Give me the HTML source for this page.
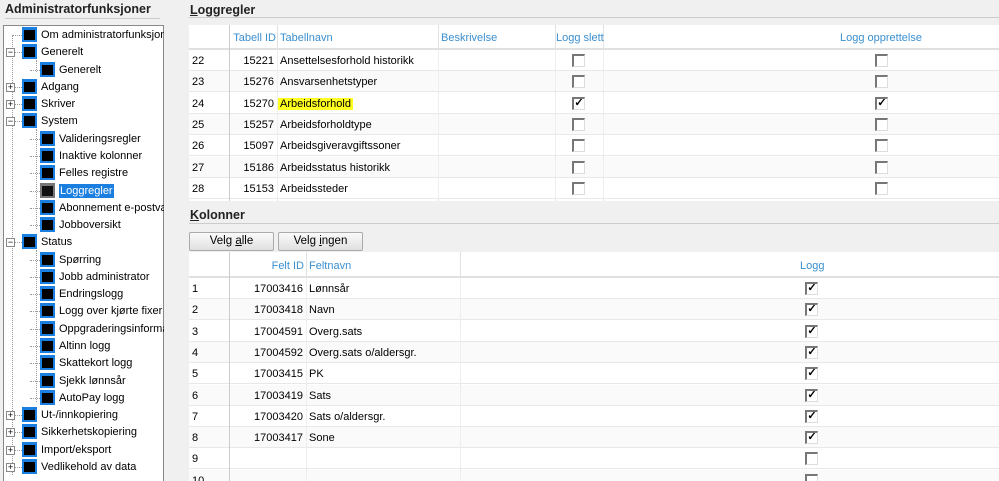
<!DOCTYPE html>
<html><head><meta charset="utf-8"><style>
*{margin:0;padding:0;box-sizing:border-box}
html,body{width:999px;height:481px;overflow:hidden}
body{background:#f0f0f0;font-family:"Liberation Sans",Arial,sans-serif;font-size:11px;color:#000;position:relative}
.a{position:absolute;white-space:nowrap}
.h1{font-size:12.5px;font-weight:bold;color:#222}
.tree{position:absolute;left:3px;top:25px;width:161px;height:460px;background:#fff;border:1px solid #888;overflow:hidden}
.ic{position:absolute;width:15px;height:15px;background:#000;border:2px solid #1a7fe0;border-top-width:3px}
.ex{position:absolute;width:9px;height:9px;border:1px solid #888;background:#fff;font-size:9px;line-height:7px;text-align:center;color:#000}
.vl{position:absolute;border-left:1px dotted #999}
.hl{position:absolute;border-top:1px dotted #999;height:0}
.tbl{position:absolute;background:#fff}
.hd{color:#3a8fd0}
.cb{position:absolute;width:13px;height:13px;border:1px solid #777;border-right-color:#ddd;border-bottom-color:#ddd;border-left-width:2px;border-top-width:2px;background:#fff;font-size:11px;line-height:9px;text-align:center;font-weight:bold}
.btn{position:absolute;height:19px;border:1px solid #aaa;border-radius:2px;background:linear-gradient(#fafafa,#e0e0e0);text-align:center;line-height:17px;font-size:11.5px}
.row{position:absolute;left:0;right:0;border-bottom:1px solid #e4e4e4}
.vc{position:absolute;top:0;bottom:0;border-left:1px solid #e2e2e2}
</style></head><body>

<div class="a h1" style="left:5px;top:2px">Administratorfunksjoner</div>
<div class="a" style="left:5px;top:18px;width:155px;border-top:1px solid #ccc"></div>

<div class="tree">
 <div class="vl" style="left:8px;top:9px;height:440px"></div>
 <div class="vl" style="left:32px;top:34px;height:12px"></div>
 <div class="vl" style="left:32px;top:103px;height:100px"></div>
 <div class="vl" style="left:32px;top:224px;height:152px"></div>
</div>

<div class="a h1" style="left:190px;top:3px"><u>L</u>oggregler</div>
<div class="a" style="left:189px;top:17px;width:810px;border-top:1px solid #ccc"></div>

<div class="tbl" style="left:189px;top:25px;width:810px;height:176px">
 <div class="row" style="top:0;height:25px;border-bottom:2px solid #e0e0e0"></div>
 <div class="vc" style="left:40px;border-color:#ccc"></div><div class="vc" style="left:88px"></div><div class="vc" style="left:249px"></div><div class="vc" style="left:366px"></div><div class="vc" style="left:414px"></div>
 <div class="a hd" style="left:40px;width:47px;text-align:right;top:7px">Tabell ID</div>
 <div class="a hd" style="left:91px;top:7px">Tabellnavn</div>
 <div class="a hd" style="left:252px;top:7px">Beskrivelse</div>
 <div class="a hd" style="left:367px;top:7px">Logg slett</div>
 <div class="a hd" style="left:651px;top:7px">Logg opprettelse</div>
</div>

<div class="a h1" style="left:190px;top:208px"><u>K</u>olonner</div>
<div class="a" style="left:189px;top:223px;width:810px;border-top:1px solid #ccc"></div>
<div class="btn" style="left:189px;top:232px;width:85px">Velg <u>a</u>lle</div>
<div class="btn" style="left:278px;top:232px;width:85px">Velg <u>i</u>ngen</div>

<div class="tbl" style="left:189px;top:252px;width:810px;height:229px">
 <div class="row" style="top:0;height:26px;border-bottom:2px solid #e0e0e0"></div>
 <div class="vc" style="left:40px;border-color:#ccc"></div><div class="vc" style="left:117px"></div><div class="vc" style="left:271px"></div>
 <div class="a hd" style="left:40px;width:75px;text-align:right;top:8px">Felt ID</div>
 <div class="a hd" style="left:120px;top:8px">Feltnavn</div>
 <div class="a hd" style="left:611px;top:8px">Logg</div>
</div>

<div id="g"></div>
<script>
var h='';
var T=[["Om administratorfunksjoner",0,''],["Generelt",0,'−'],["Generelt",1,''],["Adgang",0,'+'],["Skriver",0,'+'],["System",0,'−'],["Valideringsregler",1,''],["Inaktive kolonner",1,''],["Felles registre",1,''],["Loggregler",1,'',1],["Abonnement e-postvarsling",1,''],["Jobboversikt",1,''],["Status",0,'−'],["Spørring",1,''],["Jobb administrator",1,''],["Endringslogg",1,''],["Logg over kjørte fixer",1,''],["Oppgraderingsinformasjon",1,''],["Altinn logg",1,''],["Skattekort logg",1,''],["Sjekk lønnsår",1,''],["AutoPay logg",1,''],["Ut-/innkopiering",0,'+'],["Sikkerhetskopiering",0,'+'],["Import/eksport",0,'+'],["Vedlikehold av data",0,'+']];
T.forEach(function(r,i){var y=Math.round(35+i*17.28);var x=r[1]?40:22;
h+='<div class="hl" style="left:'+(r[1]?30:12)+'px;top:'+y+'px;width:10px"></div>';
if(r[2])h+='<div class="ex" style="left:6px;top:'+(y-4)+'px">'+(r[2]=='+'?'+':'−')+'</div>';
h+='<div class="ic" style="left:'+x+'px;top:'+(y-8)+'px'+(r[3]?';background:#111;border-color:#777':'')+'"></div>';
h+='<div class="a" style="left:'+(x+19)+'px;top:'+(y-7)+'px;width:'+(164-x-19)+'px;overflow:hidden;line-height:15px"><span style="'+(r[3]?'background:#1a7fe0;color:#fff;padding:1px 1px':'')+'">'+r[0]+'</span></div>';});
var A=[["22","15221","Ansettelsesforhold historikk"],["23","15276","Ansvarsenhetstyper"],["24","15270","Arbeidsforhold",1],["25","15257","Arbeidsforholdtype"],["26","15097","Arbeidsgiveravgiftssoner"],["27","15186","Arbeidsstatus historikk"],["28","15153","Arbeidssteder"]];
A.forEach(function(r,i){var y=Math.round(50+i*21.3);
h+='<div class="a" style="left:189px;top:'+y+'px;width:810px;height:21px;background:'+(i%2?'#fafafa':'#fff')+';border-bottom:1px solid #e8e8e8"></div>';
h+='<div class="a" style="left:229px;top:'+y+'px;height:21px;border-left:1px solid #ccc"></div>';
[277,438,555,603].forEach(function(c){h+='<div class="a" style="left:'+c+'px;top:'+y+'px;height:21px;border-left:1px solid #eee"></div>'});
h+='<div class="a" style="left:192px;top:'+(y+5)+'px">'+r[0]+'</div><div class="a" style="left:229px;width:45px;text-align:right;top:'+(y+5)+'px">'+r[1]+'</div>';
h+='<div class="a" style="left:280px;top:'+(y+5)+'px'+(r[3]?';background:#ffff20;padding:0 2px;margin-left:-2px':'')+'">'+r[2]+'</div>';
h+='<div class="cb" style="left:572px;top:'+(y+4)+'px">'+(r[3]?'✓':'')+'</div><div class="cb" style="left:875px;top:'+(y+4)+'px">'+(r[3]?'✓':'')+'</div>';});
var B=[["17003416","Lønnsår"],["17003418","Navn"],["17004591","Overg.sats"],["17004592","Overg.sats o/aldersgr."],["17003415","PK"],["17003419","Sats"],["17003420","Sats o/aldersgr."],["17003417","Sone"],["",""],["",""]];
B.forEach(function(r,i){var y=Math.round(278+i*21.3);
h+='<div class="a" style="left:189px;top:'+y+'px;width:810px;height:21px;background:'+(i%2?'#fafafa':'#fff')+';border-bottom:1px solid #e8e8e8"></div>';
h+='<div class="a" style="left:229px;top:'+y+'px;height:21px;border-left:1px solid #ccc"></div>';
[306,460].forEach(function(c){h+='<div class="a" style="left:'+c+'px;top:'+y+'px;height:21px;border-left:1px solid #eee"></div>'});
h+='<div class="a" style="left:192px;top:'+(y+5)+'px">'+(i+1)+'</div><div class="a" style="left:229px;width:74px;text-align:right;top:'+(y+5)+'px">'+r[0]+'</div>';
h+='<div class="a" style="left:309px;top:'+(y+5)+'px">'+r[1]+'</div>';
h+='<div class="cb" style="left:805px;top:'+(y+4)+'px">'+(i<8?'✓':'')+'</div>';});
document.getElementById('g').innerHTML=h;
</script>
</body></html>
